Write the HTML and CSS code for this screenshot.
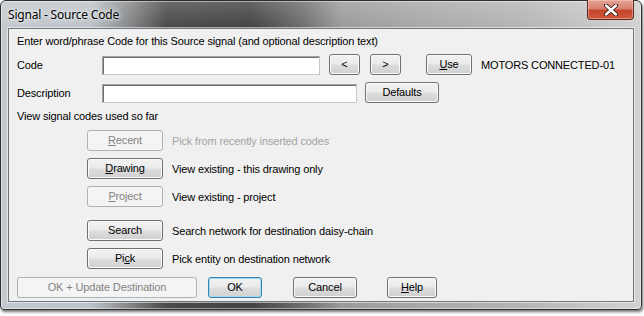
FILE: index.html
```html
<!DOCTYPE html>
<html>
<head>
<meta charset="utf-8">
<link rel="stylesheet" href="styles.css">
</head>
<body>
<div class="window">
  <div class="titlebar">
    <span class="title">Signal - Source Code</span>
    <div class="close">
      <svg width="18" height="12" viewBox="0 0 18 12">
        <path d="M4 1.5 L14 10.5 M14 1.5 L4 10.5" stroke="#3a1a14" stroke-width="4.2" stroke-linecap="round"/>
        <path d="M4 1.5 L14 10.5 M14 1.5 L4 10.5" stroke="#ffffff" stroke-width="2.4" stroke-linecap="round"/>
      </svg>
    </div>
  </div>
  <div class="client">
    <div class="intro">Enter word/phrase Code for this Source signal (and optional description text)</div>

    <div class="row row-code">
      <span class="label">Code</span>
      <div class="input input-code"></div>
      <button class="btn btn-arrow">&lt;</button>
      <button class="btn btn-arrow">&gt;</button>
      <button class="btn btn-use"><u>U</u>se</button>
      <span class="value">MOTORS CONNECTED-01</span>
    </div>

    <div class="row row-desc">
      <span class="label">Description</span>
      <div class="input input-desc"></div>
      <button class="btn btn-defaults">Defaults</button>
    </div>

    <div class="view-text">View signal codes used so far</div>

    <div class="opt opt-recent">
      <button class="btn btn-col disabled"><u>R</u>ecent</button>
      <span class="opt-label dim">Pick from recently inserted codes</span>
    </div>
    <div class="opt opt-drawing">
      <button class="btn btn-col"><u>D</u>rawing</button>
      <span class="opt-label">View existing - this drawing only</span>
    </div>
    <div class="opt opt-project">
      <button class="btn btn-col disabled"><u>P</u>roject</button>
      <span class="opt-label">View existing - project</span>
    </div>
    <div class="opt opt-search">
      <button class="btn btn-col">Search</button>
      <span class="opt-label">Search network for destination daisy-chain</span>
    </div>
    <div class="opt opt-pick">
      <button class="btn btn-col">Pi<u>c</u>k</button>
      <span class="opt-label">Pick entity on destination network</span>
    </div>

    <div class="bottom">
      <button class="btn disabled btn-update">OK + Update Destination</button>
      <button class="btn btn-default btn-ok">OK</button>
      <button class="btn btn-cancel">Cancel</button>
      <button class="btn btn-help"><u>H</u>elp</button>
    </div>
  </div>
</div>
</body>
</html>
```

FILE: styles.css
```css
html, body {
  margin: 0;
  padding: 0;
  background: #ffffff;
}

body {
  width: 644px;
  height: 316px;
  overflow: hidden;
}

.window {
  width: 640px;
  height: 308px;
  border: 1px solid #2e2e2e;
  border-radius: 6px 6px 4px 4px;
  background:
    linear-gradient(90deg,
      #c3c9cf 0px,
      #bcc2c7 90px,
      #8a8c8e 125px,
      #4a4a4a 165px,
      #434343 250px,
      #6c6c6c 300px,
      #9a9a9a 340px,
      #a8a8a8 420px,
      #b4b4b4 520px,
      #c8c8c8 600px,
      #d2d2d2 640px);
  box-shadow: 1px 2px 3px rgba(0, 0, 0, 0.55), inset 0 0 0 1px rgba(255, 255, 255, 0.45);
  display: flex;
  flex-direction: column;
  font-family: "Liberation Sans", Arial, sans-serif;
  font-size: 11px;
  letter-spacing: -0.15px;
  color: #000;
  position: relative;
}

.titlebar {
  height: 27px;
  display: flex;
  align-items: center;
  padding-left: 7px;
  position: relative;
  background: linear-gradient(180deg, rgba(255,255,255,0.18), rgba(255,255,255,0));
  border-radius: 5px 5px 0 0;
}

.title {
  font-family: "Noto Sans", "Open Sans", sans-serif;
  font-size: 12px;
  letter-spacing: -0.2px;
  color: #000;
  text-shadow: 0 0 6px rgba(255, 255, 255, 0.9), 0 0 3px rgba(255, 255, 255, 0.9);
  margin-top: -1px;
}

.close {
  position: absolute;
  right: 7px;
  top: -1px;
  width: 45px;
  height: 19px;
  border: 1px solid #5a2a24;
  border-top: none;
  border-radius: 0 0 4px 4px;
  background: linear-gradient(180deg, #e3a597 0%, #d9826f 45%, #c6452c 55%, #cf5a3c 100%);
  box-shadow: inset 0 0 0 1px rgba(255, 200, 190, 0.5);
  display: flex;
  align-items: center;
  justify-content: center;
}

.client {
  flex: 1;
  margin: 0 7px 7px 7px;
  border: 1px solid #6e7780;
  box-shadow: 0 0 0 1px rgba(255, 255, 255, 0.55);
  background: #f0f0f0;
  padding: 0 8px;
  display: flex;
  flex-direction: column;
}

.intro {
  height: 13px;
  line-height: 13px;
  margin-top: 6px;
}

.row {
  display: flex;
  align-items: center;
  height: 21px;
}

.row-code {
  margin-top: 6px;
}

.row-desc {
  margin-top: 7px;
}

.label {
  width: 85px;
  flex: none;
}

.input {
  height: 17px;
  background: #fff;
  border: 1px solid #a0a0a0;
  border-bottom-color: #c8c8c8;
  border-right-color: #c8c8c8;
  box-shadow: inset 1px 1px 0 #707070;
  margin-top: 1px;
  flex: none;
}

.input-code {
  width: 216px;
  margin-right: 9px;
}

.input-desc {
  width: 253px;
  margin-right: 8px;
}

.btn {
  font-family: "Liberation Sans", Arial, sans-serif;
  font-size: 11px;
  letter-spacing: -0.15px;
  color: #000;
  height: 21px;
  padding: 0;
  border: 1px solid #707070;
  border-radius: 3px;
  background: linear-gradient(180deg, #f2f2f2 0%, #ebebeb 48%, #dddddd 52%, #cfcfcf 100%);
  box-shadow: inset 0 0 0 1px #fbfbfb;
  flex: none;
  line-height: 17px;
  text-align: center;
}

.btn u {
  text-decoration: underline;
  text-underline-offset: 1px;
}

.btn.disabled {
  border-color: #adb2b5;
  background: #f4f4f4;
  color: #838383;
  box-shadow: none;
}

.btn-default {
  border-color: #3c7fb1;
  box-shadow: inset 0 0 0 1px #9fdaf6;
  background: linear-gradient(180deg, #f2f2f2 0%, #ebebeb 48%, #dddddd 52%, #d3d3d3 100%);
}

.btn-arrow {
  width: 31px;
  margin-right: 10px;
}

.btn-arrow + .btn-arrow {
  margin-right: 25px;
}

.btn-use {
  width: 46px;
  margin-right: 9px;
}

.value {
  white-space: nowrap;
}

.btn-defaults {
  width: 74px;
}

.view-text {
  margin-top: 7px;
  height: 13px;
  line-height: 13px;
}

.opt {
  display: flex;
  align-items: center;
  padding-left: 70px;
  height: 21px;
}

.opt-recent { margin-top: 7px; }
.opt-drawing { margin-top: 7px; }
.opt-project { margin-top: 7px; }
.opt-search { margin-top: 13px; }
.opt-pick { margin-top: 7px; }

.btn-col {
  width: 76px;
  margin-right: 9px;
}

.opt-label.dim {
  color: #a3a3a3;
}

.bottom {
  display: flex;
  align-items: center;
  margin-top: 8px;
  height: 21px;
}

.btn-update {
  width: 180px;
  margin-right: 11px;
}

.btn-ok {
  width: 54px;
  margin-right: 31px;
}

.btn-cancel {
  width: 64px;
  margin-right: 30px;
}

.btn-help {
  width: 50px;
}
```
